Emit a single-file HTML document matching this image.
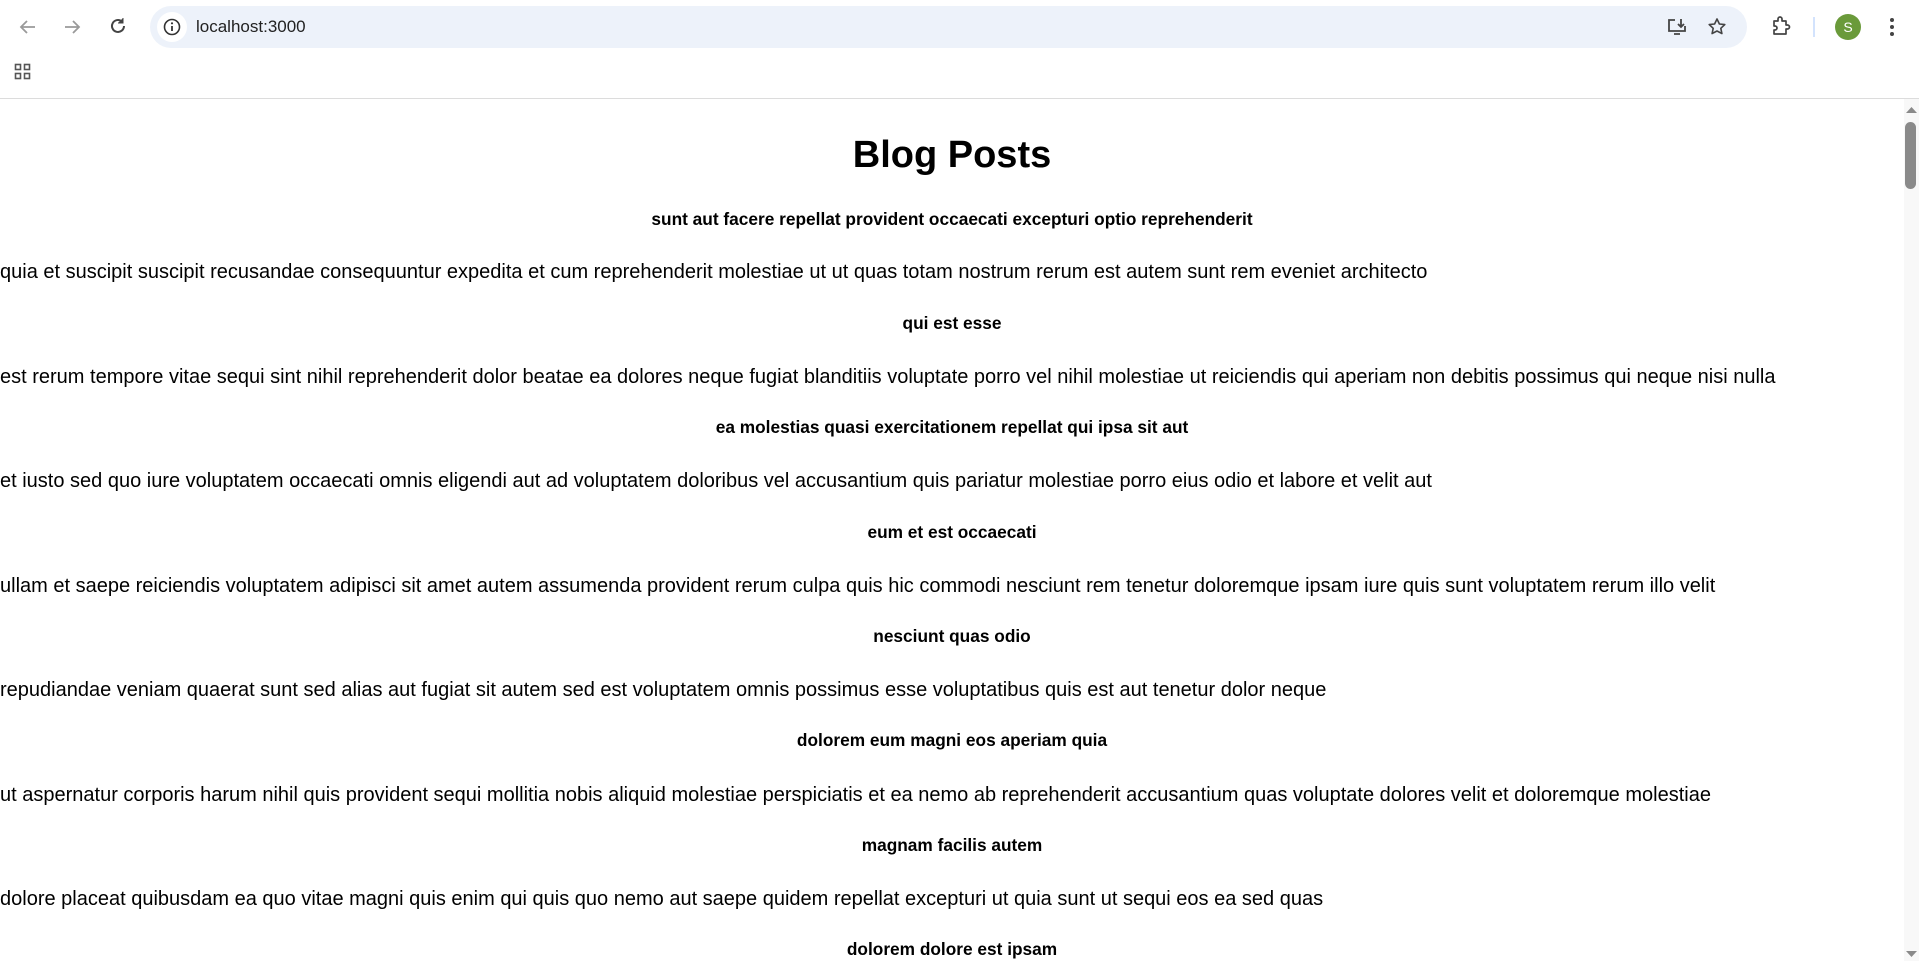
<!DOCTYPE html>
<html><head><meta charset="utf-8"><style>
html,body{margin:0;padding:0;width:1919px;height:961px;overflow:hidden;background:#fff;font-family:"Liberation Sans",Arial,sans-serif;color:#000}
.abs{position:absolute}
.h5{position:absolute;left:0;width:1904px;text-align:center;font-weight:bold;font-size:17.3px;line-height:24px;white-space:nowrap}
.p{position:absolute;left:0;font-size:20px;line-height:24px;white-space:nowrap}
</style></head><body>
<div class="abs" style="left:0;top:0;width:1919px;height:98px;background:#fff;border-bottom:1px solid #dcdcdc"></div>
<svg class="abs" style="left:16px;top:15px" width="24" height="24" viewBox="0 0 24 24"><path d="M19 12H6M11 6l-6 6 6 6" stroke="#9a9a9a" stroke-width="1.8" fill="none"/></svg>
<svg class="abs" style="left:60px;top:15px" width="24" height="24" viewBox="0 0 24 24"><path d="M5 12h13M13 6l6 6-6 6" stroke="#9a9a9a" stroke-width="1.8" fill="none"/></svg>
<svg class="abs" style="left:106px;top:14px" width="24" height="24" viewBox="0 0 24 24"><path d="M18 12a6 6 0 1 1-2-4.5" stroke="#444" stroke-width="2" fill="none"/><path d="M17 4v5h-5" fill="#444" stroke="#444" stroke-width="1"/></svg>
<div class="abs" style="left:150px;top:6px;width:1597px;height:42px;border-radius:21px;background:#edf2fa"></div>
<div class="abs" style="left:157px;top:12px;width:30px;height:30px;border-radius:15px;background:#fff"></div>
<svg class="abs" style="left:162px;top:17px" width="20" height="20" viewBox="0 0 20 20"><circle cx="10" cy="10" r="7.5" stroke="#333" stroke-width="1.6" fill="none"/><path d="M10 9v5" stroke="#333" stroke-width="1.8"/><circle cx="10" cy="6.3" r="1.1" fill="#333"/></svg>
<div class="abs" style="left:196px;top:16px;font-size:17px;line-height:22px;color:#222">localhost:3000</div>
<svg class="abs" style="left:1665px;top:15px" width="24" height="24" viewBox="0 0 24 24"><path d="M10 5H4v11h16v-5M9 19h6" stroke="#444" stroke-width="1.8" fill="none"/><path d="M16 4v8M13 9l3 3 3-3" stroke="#444" stroke-width="1.8" fill="none"/></svg>
<svg class="abs" style="left:1705px;top:15px" width="24" height="24" viewBox="0 0 24 24"><path d="M12 4l2.4 5 5.4.6-4 3.7 1.1 5.3L12 16l-4.9 2.6 1.1-5.3-4-3.7 5.4-.6z" stroke="#444" stroke-width="1.6" fill="none" stroke-linejoin="round"/></svg>
<svg class="abs" style="left:1769px;top:14px" width="24" height="24" viewBox="0 0 24 24"><path d="M5 7h4V5a2 2 0 0 1 4 0v2h4v4h1.5a2 2 0 0 1 0 4H17v5H5v-4h1a2 2 0 0 0 0-4H5z" stroke="#444" stroke-width="1.7" fill="none" stroke-linejoin="round"/></svg>
<div class="abs" style="left:1813px;top:17px;width:2px;height:20px;background:#d3e3fd"></div>
<div class="abs" style="left:1835px;top:14px;width:26px;height:26px;border-radius:13px;background:#6a9a3a;color:#fff;font-size:14px;line-height:26px;text-align:center">S</div>
<svg class="abs" style="left:1882px;top:15px" width="20" height="24" viewBox="0 0 20 24"><circle cx="10" cy="5" r="2" fill="#444"/><circle cx="10" cy="12" r="2" fill="#444"/><circle cx="10" cy="19" r="2" fill="#444"/></svg>
<svg class="abs" style="left:14px;top:63px" width="18" height="18" viewBox="0 0 18 18"><g stroke="#555" stroke-width="1.6" fill="none"><rect x="1.5" y="1.5" width="5" height="5"/><rect x="10.5" y="1.5" width="5" height="5"/><rect x="1.5" y="10.5" width="5" height="5"/><rect x="10.5" y="10.5" width="5" height="5"/></g></svg>
<div class="abs" style="left:1904px;top:99px;width:15px;height:862px;background:#f8f8f8"></div>
<div class="abs" style="left:1905px;top:122px;width:11px;height:67px;border-radius:6px;background:#8a8a8a"></div>
<svg class="abs" style="left:1904px;top:103px" width="15" height="12"><path d="M2 10L7.5 4 13 10z" fill="#8a8a8a"/></svg>
<svg class="abs" style="left:1904px;top:949px" width="15" height="12"><path d="M2 2L7.5 8 13 2z" fill="#8a8a8a"/></svg>
<div class="abs" style="left:0;top:131px;width:1904px;text-align:center;font-weight:bold;font-size:38px;line-height:48px">Blog Posts</div>
<div class="h5" style="top:207px">sunt aut facere repellat provident occaecati excepturi optio reprehenderit</div>
<div class="p" style="top:260px">quia et suscipit suscipit recusandae consequuntur expedita et cum reprehenderit molestiae ut ut quas totam nostrum rerum est autem sunt rem eveniet architecto</div>
<div class="h5" style="top:311px">qui est esse</div>
<div class="p" style="top:365px">est rerum tempore vitae sequi sint nihil reprehenderit dolor beatae ea dolores neque fugiat blanditiis voluptate porro vel nihil molestiae ut reiciendis qui aperiam non debitis possimus qui neque nisi nulla</div>
<div class="h5" style="top:415px">ea molestias quasi exercitationem repellat qui ipsa sit aut</div>
<div class="p" style="top:469px">et iusto sed quo iure voluptatem occaecati omnis eligendi aut ad voluptatem doloribus vel accusantium quis pariatur molestiae porro eius odio et labore et velit aut</div>
<div class="h5" style="top:520px">eum et est occaecati</div>
<div class="p" style="top:574px">ullam et saepe reiciendis voluptatem adipisci sit amet autem assumenda provident rerum culpa quis hic commodi nesciunt rem tenetur doloremque ipsam iure quis sunt voluptatem rerum illo velit</div>
<div class="h5" style="top:624px">nesciunt quas odio</div>
<div class="p" style="top:678px">repudiandae veniam quaerat sunt sed alias aut fugiat sit autem sed est voluptatem omnis possimus esse voluptatibus quis est aut tenetur dolor neque</div>
<div class="h5" style="top:728px">dolorem eum magni eos aperiam quia</div>
<div class="p" style="top:783px">ut aspernatur corporis harum nihil quis provident sequi mollitia nobis aliquid molestiae perspiciatis et ea nemo ab reprehenderit accusantium quas voluptate dolores velit et doloremque molestiae</div>
<div class="h5" style="top:833px">magnam facilis autem</div>
<div class="p" style="top:887px">dolore placeat quibusdam ea quo vitae magni quis enim qui quis quo nemo aut saepe quidem repellat excepturi ut quia sunt ut sequi eos ea sed quas</div>
<div class="h5" style="top:937px">dolorem dolore est ipsam</div>
</body></html>
